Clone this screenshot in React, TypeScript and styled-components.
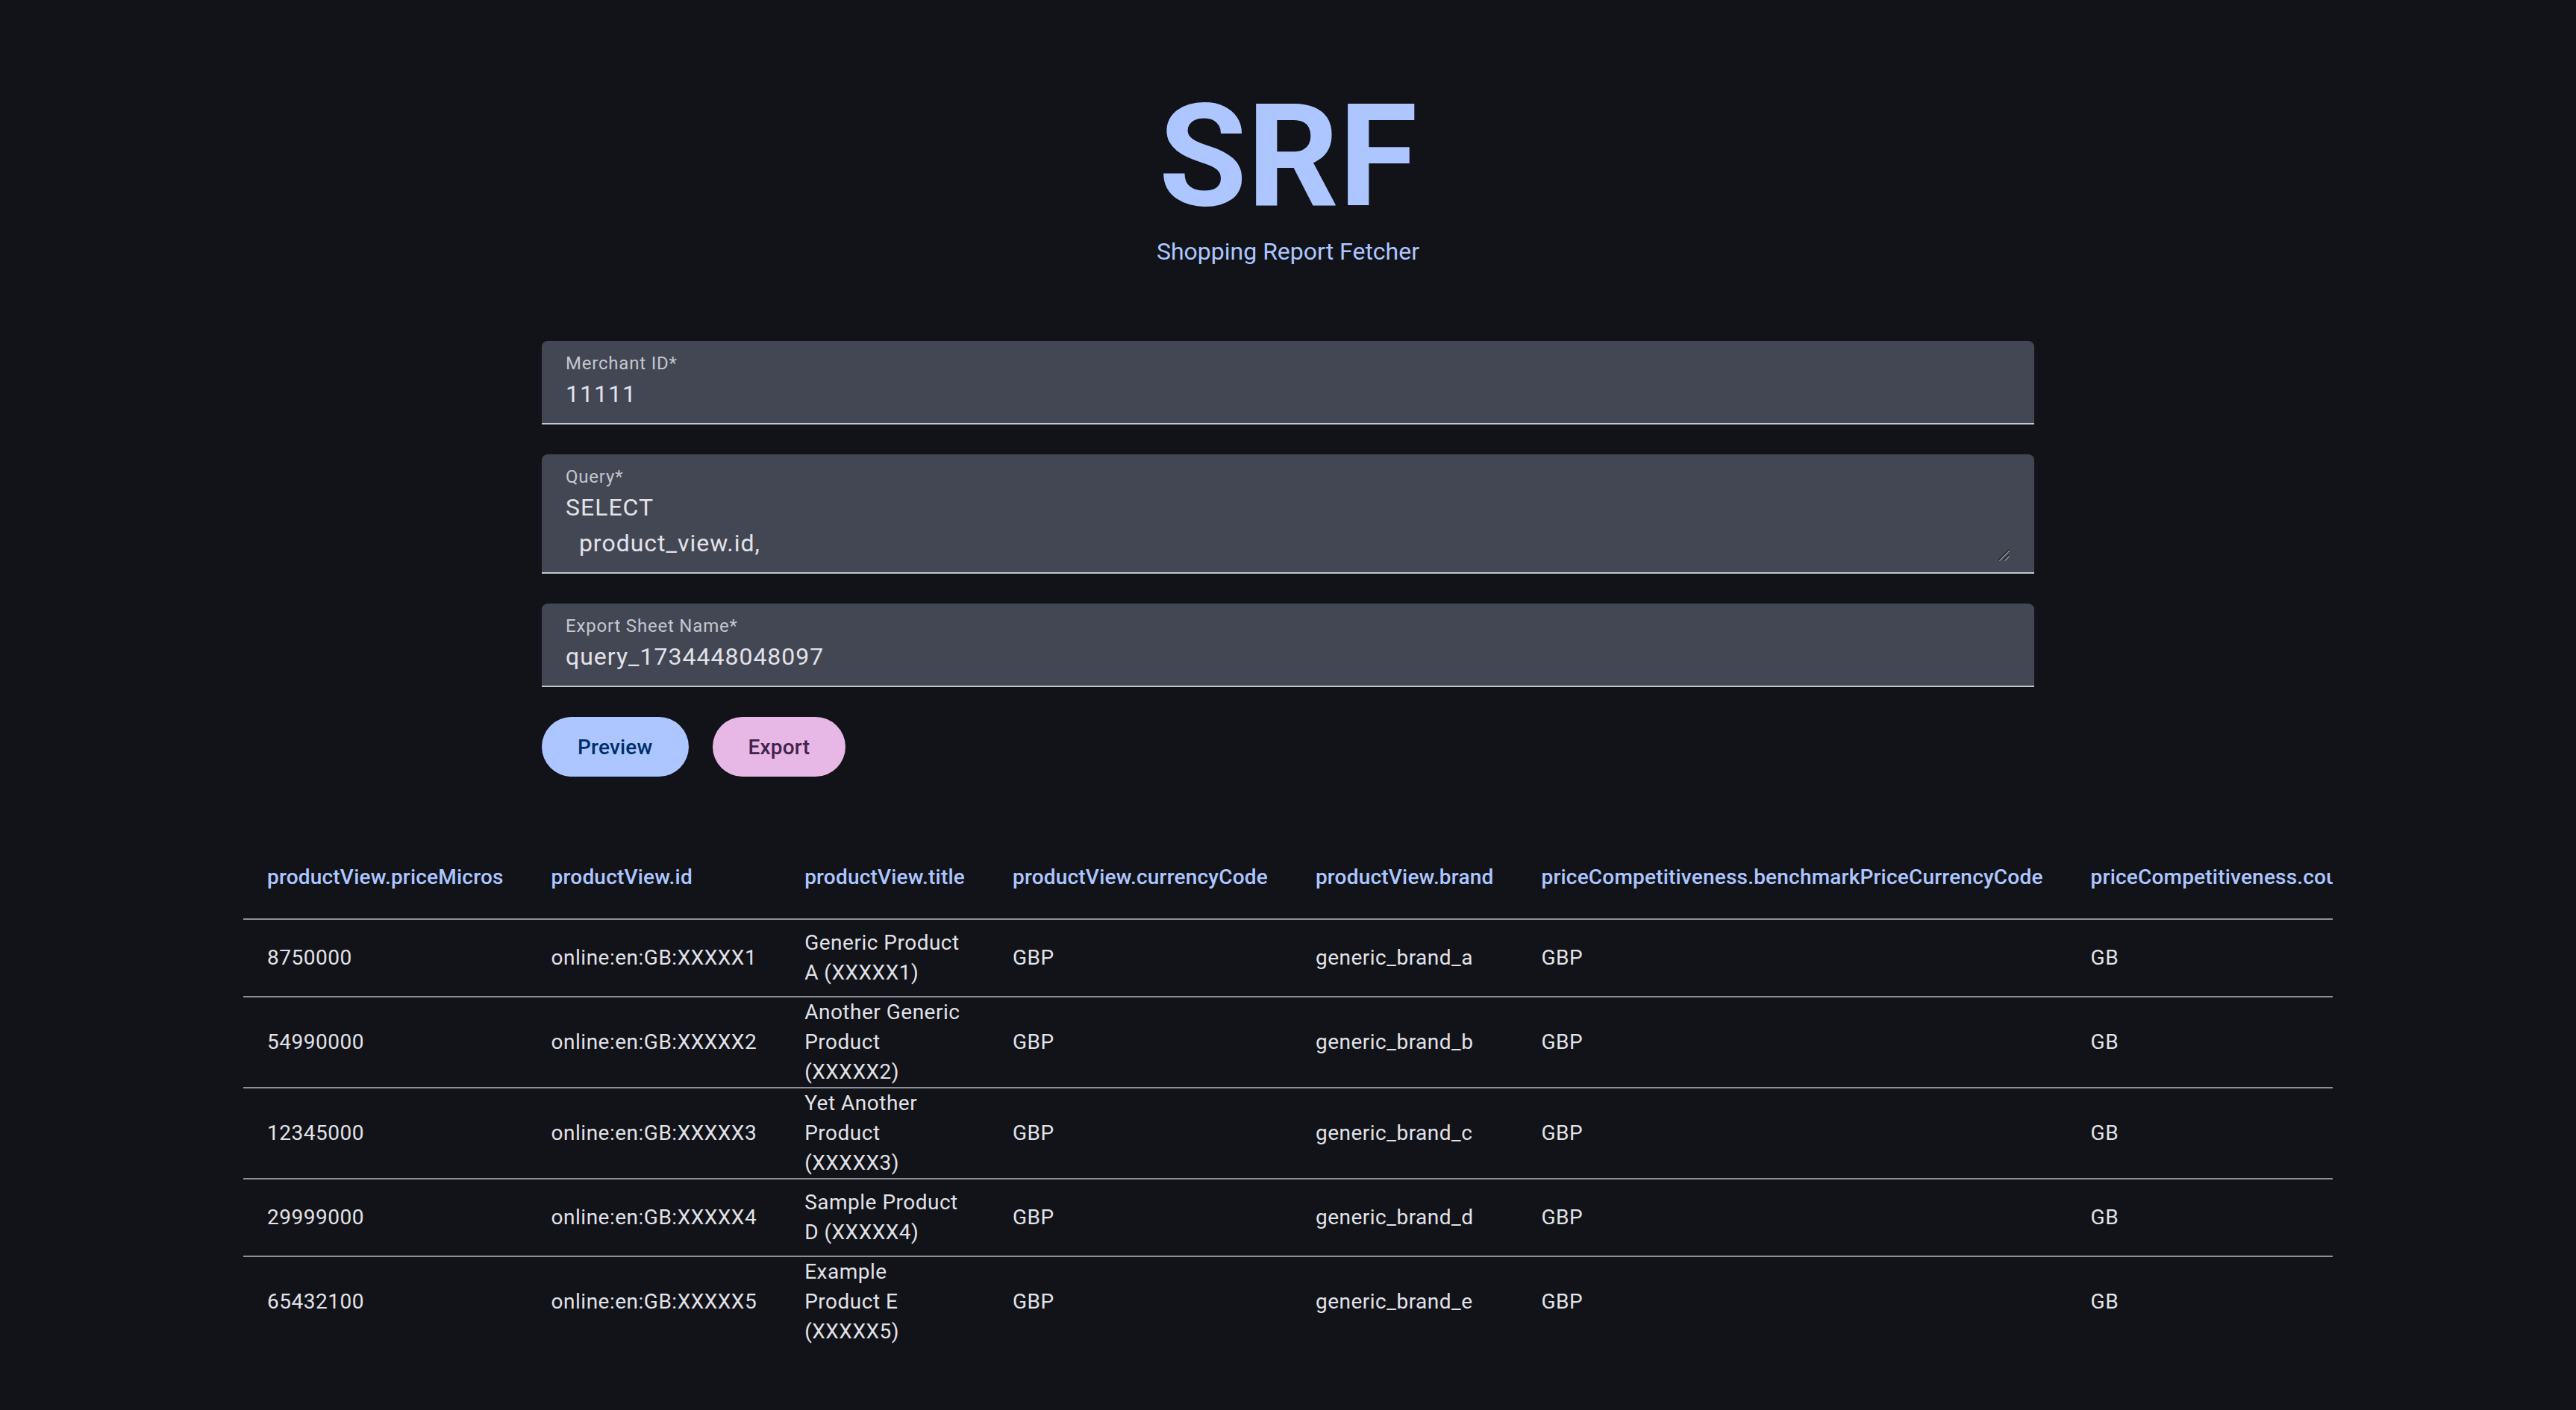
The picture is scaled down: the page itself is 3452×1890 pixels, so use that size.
import styled, { createGlobalStyle } from "styled-components";

const columns = [
  "productView.priceMicros",
  "productView.id",
  "productView.title",
  "productView.currencyCode",
  "productView.brand",
  "priceCompetitiveness.benchmarkPriceCurrencyCode",
  "priceCompetitiveness.countryCode",
];

const rows = [
  ["8750000", "online:en:GB:XXXXX1", "Generic Product A (XXXXX1)", "GBP", "generic_brand_a", "GBP", "GB"],
  ["54990000", "online:en:GB:XXXXX2", "Another Generic Product (XXXXX2)", "GBP", "generic_brand_b", "GBP", "GB"],
  ["12345000", "online:en:GB:XXXXX3", "Yet Another Product (XXXXX3)", "GBP", "generic_brand_c", "GBP", "GB"],
  ["29999000", "online:en:GB:XXXXX4", "Sample Product D (XXXXX4)", "GBP", "generic_brand_d", "GBP", "GB"],
  ["65432100", "online:en:GB:XXXXX5", "Example Product E (XXXXX5)", "GBP", "generic_brand_e", "GBP", "GB"],
];

export default function App() {
  return (
    <>
      <GlobalStyle />
      <Page>
        <Header>
          <Title>SRF</Title>
          <Subtitle>Shopping Report Fetcher</Subtitle>
        </Header>

        <Form>
          <Field>
            <Label>Merchant ID*</Label>
            <Input defaultValue="11111" />
          </Field>
          <Field>
            <Label>Query*</Label>
            <TextAreaWrap>
              <TextArea rows={2} defaultValue={"SELECT\n  product_view.id,"} />
              <Resizer viewBox="0 0 16 16" aria-hidden="true">
                <path d="M1 15 L15 1" stroke="#1c1d22" strokeWidth="1.6" />
                <path d="M2.4 15.6 L15.6 2.4" stroke="#a4a6ae" strokeWidth="1.2" />
                <path d="M8 15 L15 8" stroke="#1c1d22" strokeWidth="1.6" />
                <path d="M9.4 15.6 L15.6 9.4" stroke="#a4a6ae" strokeWidth="1.2" />
              </Resizer>
            </TextAreaWrap>
          </Field>
          <Field>
            <Label>Export Sheet Name*</Label>
            <Input defaultValue="query_1734448048097" />
          </Field>
          <Actions>
            <Button $variant="primary">Preview</Button>
            <Button $variant="tertiary">Export</Button>
          </Actions>
        </Form>

        <TableScroller>
          <Table>
            <thead>
              <tr>
                {columns.map((c) => (
                  <Th key={c}>{c}</Th>
                ))}
              </tr>
            </thead>
            <tbody>
              {rows.map((r) => (
                <Tr key={r[1]}>
                  {r.map((v, i) => (
                    <Td key={i}>{v}</Td>
                  ))}
                </Tr>
              ))}
            </tbody>
          </Table>
        </TableScroller>
      </Page>
    </>
  );
}

const GlobalStyle = createGlobalStyle`
  html, body {
    margin: 0;
    padding: 0;
    background: #111318;
    overflow: hidden;
    color-scheme: dark;
  }

  body {
    font-family: Roboto, "Noto Sans", "Liberation Sans", sans-serif;
  }
`;

const Page = styled.div`
  display: flex;
  flex-direction: column;
  align-items: center;
  padding-top: 114px;
  min-height: 100vh;
  box-sizing: border-box;
`;

const Header = styled.header`
  display: flex;
  flex-direction: column;
  align-items: center;
`;

const Title = styled.h1`
  margin: 0;
  font-size: 192px;
  line-height: 192px;
  font-weight: 700;
  color: #adc6ff;
`;

const Subtitle = styled.div`
  margin-top: 7px;
  font-size: 32px;
  line-height: 48px;
  color: #adc6ff;
`;

const Form = styled.div`
  width: 2000px;
  margin-top: 96px;
  display: flex;
  flex-direction: column;
  gap: 40px;
`;

const Field = styled.div`
  display: flex;
  flex-direction: column;
  padding: 14px 32px 15px;
  box-sizing: border-box;
  background: #434753;
  border-radius: 8px 8px 0 0;
  border-bottom: 2px solid #c4c6d0;
`;

const Label = styled.label`
  font-size: 24px;
  line-height: 32px;
  letter-spacing: 0.8px;
  color: #c4c6d0;
`;

const Input = styled.input`
  margin: 1px 0 0;
  padding: 0;
  border: none;
  outline: none;
  background: transparent;
  font-family: inherit;
  font-size: 32px;
  line-height: 48px;
  height: 48px;
  letter-spacing: 1px;
  color: #e2e2e9;
`;

const TextAreaWrap = styled.div`
  position: relative;
  display: flex;
  margin-top: 1px;
`;

const TextArea = styled.textarea`
  flex: 1;
  margin: 0;
  padding: 0;
  border: none;
  outline: none;
  background: transparent;
  font-family: inherit;
  font-size: 32px;
  line-height: 48px;
  height: 96px;
  letter-spacing: 1px;
  color: #e2e2e9;
  resize: none;
  overflow: hidden;
`;

const Resizer = styled.svg`
  position: absolute;
  right: 1px;
  bottom: 0;
  width: 16px;
  height: 16px;
  pointer-events: none;
`;

const Actions = styled.div`
  display: flex;
  gap: 32px;
`;

const Button = styled.button<{ $variant: "primary" | "tertiary" }>`
  height: 80px;
  padding: 0 48px;
  border: none;
  border-radius: 40px;
  font-family: inherit;
  font-size: 28px;
  font-weight: 500;
  letter-spacing: 0.2px;
  cursor: pointer;
  background: ${(p) => (p.$variant === "primary" ? "#adc6ff" : "#e7b8e6")};
  color: ${(p) => (p.$variant === "primary" ? "#002e69" : "#44234a")};
`;

const TableScroller = styled.div`
  width: 2800px;
  margin-top: 78px;
  overflow-x: auto;
  scrollbar-width: none;

  &::-webkit-scrollbar {
    display: none;
  }
`;

const Table = styled.table`
  width: 100%;
  border-collapse: collapse;
`;

const Th = styled.th`
  height: 112px;
  padding: 0 32px;
  text-align: left;
  white-space: nowrap;
  font-size: 28px;
  font-weight: 500;
  letter-spacing: 0.2px;
  color: #adc6ff;
  border-bottom: 2px solid #8e9099;
`;

const Tr = styled.tr`
  height: 104px;

  &:last-child td {
    border-bottom: none;
  }
`;

const Td = styled.td`
  padding: 0 32px;
  font-size: 28px;
  line-height: 40px;
  letter-spacing: 0.5px;
  color: #e2e2e9;
  vertical-align: middle;
  border-bottom: 2px solid #8e9099;
`;
